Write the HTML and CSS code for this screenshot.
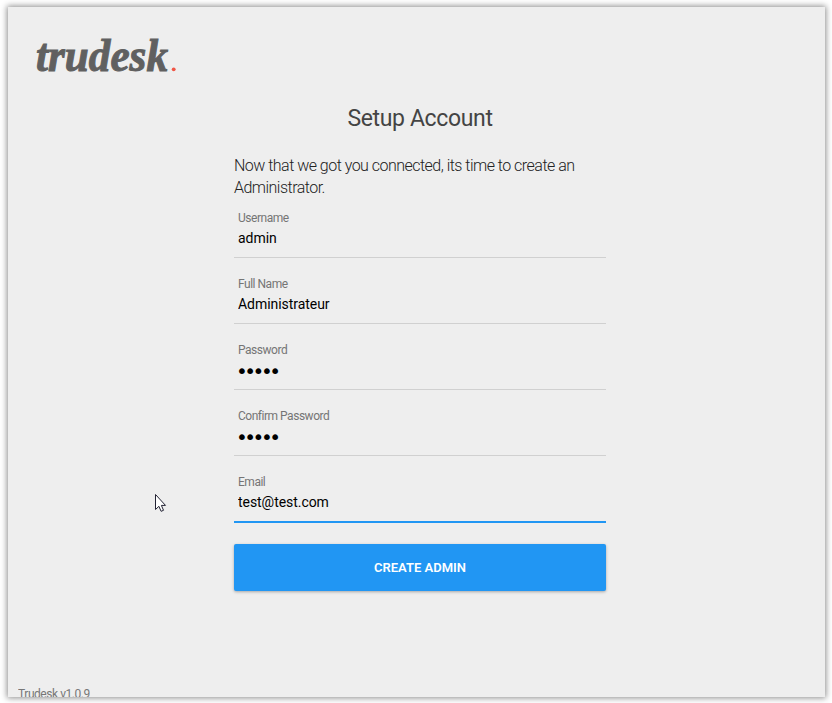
FILE: index.html
```html
<!DOCTYPE html>
<html lang="en">
<head>
    <meta charset="UTF-8">
    <meta name="viewport" content="width=device-width, initial-scale=1.0">
    <title>Trudesk</title>
    <link rel="stylesheet" href="styles.css">
</head>
<body>
    <div id="outer">
        <svg class="logo" width="150" height="44" viewBox="0 0 150 44">
            <text class="logo-name" x="2" y="36" textLength="132" lengthAdjust="spacingAndGlyphs">trudesk</text>
            <circle cx="139.7" cy="34.3" r="1.9" fill="#f05545"/>
        </svg>

        <form class="setup" onsubmit="return false">
            <h1>Setup Account</h1>
            <p>Now that we got you connected, its time to create an Administrator.</p>
            <div class="field">
                <label for="username">Username</label>
                <input type="text" id="username" value="admin">
            </div>
            <div class="field">
                <label for="fullname">Full Name</label>
                <input type="text" id="fullname" value="Administrateur">
            </div>
            <div class="field">
                <label for="password">Password</label>
                <input type="password" id="password" value="admin">
            </div>
            <div class="field">
                <label for="confirm">Confirm Password</label>
                <input type="password" id="confirm" value="admin">
            </div>
            <div class="field active">
                <label for="email">Email</label>
                <input type="text" id="email" value="test@test.com">
            </div>
            <button type="submit">Create Admin</button>
        </form>

        <div class="version">Trudesk v1.0.9</div>

        <!-- mouse pointer -->
        <svg class="cursor" width="13" height="20" viewBox="0 0 13 20">
            <path d="M1.5 1.5v15l3.4-3.2 2.2 5 2.4-1-2.1-4.9h4.1z" fill="#fff" stroke="#222233" stroke-width="1"/>
        </svg>
    </div>
</body>
</html>
```

FILE: styles.css
```css
*{
    margin: 0;
    padding: 0;
    box-sizing: border-box;
}
body{
    height: 703px;
    padding: 7px 0 0 8px;
    background-color: #fff;
    font-family: Roboto, "Liberation Sans", sans-serif;
}
#outer{
    position: relative;
    width: 817px;
    height: 690px;
    padding: 28px 0 0 26px;
    background-color: #eee;
    box-shadow: 0 0 6px 1px rgba(0,0,0,0.45);
}
.logo{
    display: block;
    overflow: visible;
}
.logo-name{
    font: italic bold 46px "Liberation Serif", serif;
    fill: #606060;
    stroke: #606060;
    stroke-width: 1;
}
.setup{
    width: 372px;
    margin: 26px 0 0 200px;
}
h1{
    font-size: 23px;
    font-weight: 400;
    line-height: 28px;
    letter-spacing: -0.35px;
    text-align: center;
    color: #444;
}
p{
    margin-top: 22px;
    font-size: 16px;
    font-weight: 300;
    line-height: 22px;
    letter-spacing: -0.52px;
    color: #222;
}
.field{
    height: 58px;
    margin-bottom: 8px;
    padding: 10px 4px 0;
    border-bottom: 1px solid #d0d0d0;
}
p + .field{
    margin-top: 1px;
}
.field label{
    display: block;
    height: 16px;
    font-size: 12px;
    line-height: 16px;
    letter-spacing: -0.48px;
    color: #757575;
}
.field input{
    display: block;
    width: 100%;
    height: 24px;
    border: 0;
    outline: 0;
    background: none;
    font-family: inherit;
    font-size: 14px;
    letter-spacing: -0.05px;
    color: #000;
}
.field input[type="password"]{
    height: 25px;
    margin-left: -2px;
    font-family: "DejaVu Sans", sans-serif;
    font-size: 20px;
    letter-spacing: -3.5px;
}
.field.active{
    height: 59px;
    border-bottom: 2px solid #2196f3;
}
button{
    display: block;
    width: 100%;
    height: 47px;
    margin-top: 21px;
    border: 0;
    border-radius: 2px;
    background-color: #2196f3;
    box-shadow: 0 1px 3px rgba(0,0,0,0.3);
    font-family: inherit;
    font-size: 13px;
    font-weight: 600;
    text-transform: uppercase;
    color: #fff;
}
/* the version line is cut off by the bottom edge */
.version{
    position: absolute;
    left: 10px;
    bottom: 0;
    height: 10px;
    overflow: hidden;
    font-size: 12px;
    line-height: 15px;
    letter-spacing: -0.45px;
    color: #777;
}
.cursor{
    position: absolute;
    left: 146px;
    top: 486px;
}
```
